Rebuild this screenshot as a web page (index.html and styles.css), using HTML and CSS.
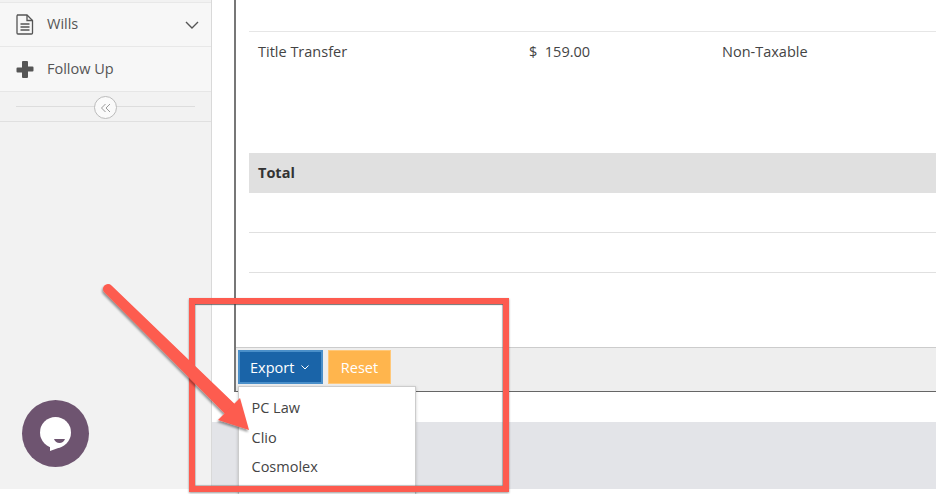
FILE: index.html
```html
<!DOCTYPE html>
<html lang="en">
<head>
<meta charset="utf-8">
<title>Export</title>
<link rel="stylesheet" href="styles.css">
</head>
<body>
<div class="page">
  <aside class="sidebar">
    <div class="nav-row nav-wills">
      <svg class="nav-icon" width="18" height="21" viewBox="0 0 18 21" fill="none" stroke="#555" stroke-width="1.300"><path d="M1.500 1h9.500l5.500 5.500V19a1 1 0 0 1-1 1H2a1 1 0 0 1-1-1V2z"/><path d="M11 1v5.500h5.500M4.500 10h9M4.500 13h9M4.500 16h9"/></svg>
      <span class="nav-label">Wills</span>
      <svg class="chev" width="14" height="8" viewBox="0 0 14 8" fill="none" stroke="#555" stroke-width="1.400"><path d="M1 1l6 6 6-6"/></svg>
    </div>
    <div class="nav-row nav-follow">
      <svg class="nav-icon" width="18" height="18" viewBox="0 0 18 18" fill="#555"><path d="M7 1h4a1 1 0 0 1 1 1v4.500h4.500a1 1 0 0 1 1 1v3a1 1 0 0 1-1 1H12V17a1 1 0 0 1-1 1H7a1 1 0 0 1-1-1v-4.500H1.500a1 1 0 0 1-1-1v-3a1 1 0 0 1 1-1H6V2a1 1 0 0 1 1-1z"/></svg>
      <span class="nav-label">Follow Up</span>
    </div>
    <div class="collapse">
      <span class="collapse-line"></span>
      <span class="collapse-btn"><svg width="12" height="10" viewBox="0 0 12 10" fill="none" stroke="#999" stroke-width="1"><path d="M5.500 1l-4 4 4 4M10 1l-4 4 4 4"/></svg></span>
    </div>
  </aside>
  <main class="main">
    <section class="panel">
      <div class="table">
        <div class="row row-top"></div>
        <div class="row row-item"><span class="col-name">Title Transfer</span><span class="col-price">$&nbsp;&nbsp;159.00</span><span class="col-tax">Non-Taxable</span></div>
        <div class="row row-total"><b>Total</b></div>
        <div class="row row-blank"></div>
        <div class="row row-blank"></div>
      </div>
      <div class="actions">
        <button class="btn btn-export">Export<svg width="8" height="5" viewBox="0 0 8 5" fill="none" stroke="#fff" stroke-width="1"><path d="M.5.500L4 4 7.500.500"/></svg></button>
        <button class="btn btn-reset">Reset</button>
        <ul class="menu">
          <li>PC Law</li>
          <li>Clio</li>
          <li>Cosmolex</li>
        </ul>
      </div>
    </section>
    <div class="footer-band"></div>
  </main>
  <button class="chat" aria-label="Chat">
    <svg class="chat-icon" width="67" height="67" viewBox="0 0 67 67"><circle cx="33.500" cy="32.500" r="15.500" fill="#fff"/><path d="M28 45L28 51 39 47z" fill="#fff"/><path d="M32 39h11c-1 2.800-3 4-5.500 4S33 41.800 32 39z" fill="#6e5470"/></svg>
  </button>
  <div class="callout"></div>
  <svg class="arrow" width="170" height="160" viewBox="0 0 170 160"><g filter="url(#arrow-shadow)" fill="#fd5b4f"><path d="M11.500 5.400L138.900 128 129.100 138 4.500 12.600A5 5 0 0 1 11.500 5.400z"/><path d="M140 118L149 150 118 140z"/></g><defs><filter id="arrow-shadow" x="-10%" y="-10%" width="120%" height="120%"><feDropShadow dx="-1" dy="2" stdDeviation="1" flood-color="#000" flood-opacity=".4"/></filter></defs></svg>
</div>
</body>
</html>
```
FILE: styles.css
```css
* { box-sizing: border-box; }
html, body { margin: 0; height: 100%; }
body { font-family: "Open Sans", "Noto Sans", sans-serif; font-size: 14.500px; color: #444; background: #fff; overflow: hidden; }
.page { position: relative; display: flex; width: 936px; height: 494px; overflow: hidden; }
.sidebar { flex: 0 0 212px; height: 489px; background: #f2f2f2; border-right: 1px solid #d9d9d9; padding-top: 2px; }
.nav-row { display: flex; align-items: center; background: #f7f7f7; border-top: 1px solid #e8e8e8; padding-left: 16px; }
.nav-wills { height: 44px; }
.nav-follow { height: 45px; }
.nav-icon { flex: none; }
.nav-label { margin: 0 0 3px 13px; color: #555; }
.nav-follow .nav-label { margin-bottom: 1px; }
.chev { margin-left: auto; margin-right: 12px; }
.collapse { position: relative; height: 31px; border-top: 1px solid #e6e6e6; border-bottom: 1px solid #e0e0e0; display: flex; align-items: center; justify-content: center; padding: 0 16px 1px; }
.collapse-line { flex: 1; height: 1px; background: #ddd; }
.collapse-btn { position: absolute; left: 94px; top: 4px; width: 23px; height: 23px; border: 1px solid #bbb; border-radius: 50%; background: #fafafa; display: flex; align-items: center; justify-content: center; }
.main { flex: 1; position: relative; height: 489px; }
.panel { margin-left: 22px; height: 392px; border-left: 2px solid #777; border-bottom: 1px solid #666; display: flex; flex-direction: column; }
.table { flex: 1; padding-left: 13px; }
.row { display: flex; align-items: center; padding-left: 9px; }
.row-top { height: 31px; }
.row-item { height: 122px; border-top: 1px solid #e6e6e6; align-items: flex-start; padding-top: 10px; }
.col-name { width: 271px; }
.col-price { width: 193px; }
.row-total { height: 40px; background: #e0e0e0; color: #333; padding-bottom: 2px; }
.row-total b { font-weight: 700; }
.row-blank { height: 40px; border-bottom: 1px solid #e0e0e0; }
.actions { position: relative; height: 44px; background: #eee; border-top: 1px solid #ccc; display: flex; align-items: flex-start; gap: 5px; padding: 2px 0 0 2px; }
.btn { height: 34px; font-family: inherit; font-size: 14.500px; color: #fff; cursor: pointer; display: flex; align-items: center; }
.btn-export { width: 85px; background: #1a64a8; border: 2px solid #4a8fc9; padding: 0 0 0 10px; gap: 7px; }
.btn-reset { width: 63px; background: #ffb54d; border: 1px solid #ffc87a; justify-content: center; padding: 0; }
.menu { position: absolute; left: 2px; top: 38px; width: 178px; height: 110px; margin: 0; padding: 6px 0 0 12.500px; list-style: none; background: #fff; border: 1px solid #ccc; box-shadow: 0 1px 3px rgba(0,0,0,.2); z-index: 2; }
.menu li { height: 29.600px; line-height: 29.600px; color: #444; }
.footer-band { margin-top: 30px; height: 67px; background: #e3e4e8; }
.chat { position: absolute; left: 22px; top: 400px; width: 67px; height: 67px; padding: 0; border: 0; border-radius: 50%; background: #6e5470; }
.chat-icon { display: block; }
.callout { position: absolute; left: 189px; top: 298px; width: 320px; height: 194px; border: 6px solid #fd5b4f; box-shadow: 0 1px 2px rgba(0,0,0,.4), inset 0 1px 1px rgba(60,60,60,.7), inset -1px 0 1px rgba(110,110,110,.4), inset 0 -1px 1px rgba(110,110,110,.4), inset 1px 0 1px rgba(110,110,110,.2); z-index: 3; }
.arrow { position: absolute; left: 100px; top: 280px; z-index: 4; }
```
